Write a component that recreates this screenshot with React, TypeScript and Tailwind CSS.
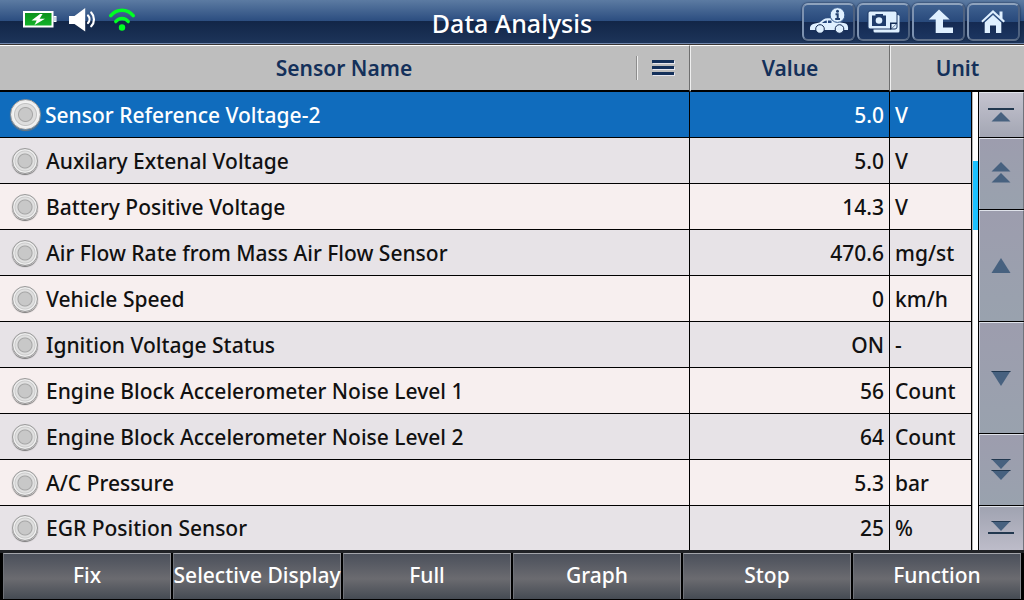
import type React from "react";
import { useState } from "react";
import { clsx } from "clsx";

interface Sensor {
  name: string;
  value: string;
  unit: string;
}

const SENSORS: Sensor[] = [
  { name: "Sensor Reference Voltage-2", value: "5.0", unit: "V" },
  { name: "Auxilary Extenal Voltage", value: "5.0", unit: "V" },
  { name: "Battery Positive Voltage", value: "14.3", unit: "V" },
  { name: "Air Flow Rate from Mass Air Flow Sensor", value: "470.6", unit: "mg/st" },
  { name: "Vehicle Speed", value: "0", unit: "km/h" },
  { name: "Ignition Voltage Status", value: "ON", unit: "-" },
  { name: "Engine Block Accelerometer Noise Level 1", value: "56", unit: "Count" },
  { name: "Engine Block Accelerometer Noise Level 2", value: "64", unit: "Count" },
  { name: "A/C Pressure", value: "5.3", unit: "bar" },
  { name: "EGR Position Sensor", value: "25", unit: "%" },
];

const ACTIONS = ["Fix", "Selective Display", "Full", "Graph", "Stop", "Function"];

const BatteryIcon = () => (
  <svg width="34" height="18" viewBox="0 0 34 18" aria-hidden="true">
    <defs>
      <linearGradient id="charge" x1="0" y1="0" x2="0" y2="1">
        <stop offset="0" stopColor="#0b8f1c" />
        <stop offset="1" stopColor="#12b52a" />
      </linearGradient>
    </defs>
    <rect x="1" y="1" width="28.500" height="14.500" fill="url(#charge)" stroke="#fff" strokeWidth="2" />
    <rect x="31" y="5.500" width="2" height="5" fill="#9fb4cf" stroke="#fff" strokeWidth="1" />
    <path d="M17 3 8.500 9.500h5.200l-2.200 4.500L22 7.700h-5.400l3-4.700z" fill="#fff" />
  </svg>
);

const SpeakerIcon = () => (
  <svg width="28" height="24" viewBox="0 0 28 24" aria-hidden="true">
    <path d="M0 8h5.500L16.200 0v23.500L5.500 16H0z" fill="#fff" />
    <path
      d="M19 7.500a5.500 5.500 0 0 1 0 7.500M22.200 4.500a10 10 0 0 1 0 13.800"
      fill="none"
      stroke="#fff"
      strokeWidth="2.200"
      strokeLinecap="round"
    />
  </svg>
);

const WifiIcon = () => (
  <svg width="26" height="24" viewBox="0 0 26 24" fill="none" stroke="#00ff22" strokeWidth="3.400" strokeLinecap="round" aria-hidden="true">
    <path d="M1.800 7.600C7.500 .4 18.500 .4 24.200 7.600" />
    <path d="M6.800 13.600c3-4.200 9.400-4.200 12.400 0" />
    <circle cx="13" cy="19.500" r="3.200" fill="#00ff22" stroke="none" />
  </svg>
);

const CarInfoIcon = () => (
  <svg className="h-full w-full" viewBox="2 2 49 34" aria-hidden="true">
    <path
      d="M8 27c-.4-3.500 1-5.500 4-6.200l5.500-1.300c2.500-2.300 5-4.300 8-4.300H31c3 0 5.500 2 7.500 4.300l4.500.8c2.600.6 3.500 3.300 3 6.700z"
      fill="#dff0ff"
    />
    <path d="M20 20c1.500-1.500 3-2.500 4.800-2.600V20zM26 17.400h3.500V20H26z" fill="#24457a" />
    <g fill="#dff0ff" stroke="#142a52" strokeWidth="1">
      <circle cx="18" cy="26" r="4.300" />
      <circle cx="37.500" cy="26" r="4.300" />
      <circle cx="35.500" cy="12" r="7.400" stroke="#31568a" />
    </g>
    <circle cx="35.500" cy="8.200" r="1.500" fill="#22406f" />
    <path d="M33.500 11.200h2.200v4.600M33.200 16H38" fill="none" stroke="#22406f" strokeWidth="2" />
  </svg>
);

const SnapshotIcon = () => (
  <svg className="h-full w-full" viewBox="2 2 49 34" aria-hidden="true">
    <rect x="16.500" y="12" width="26" height="17.500" rx="1.500" fill="#dff0ff" />
    <rect x="11" y="8" width="29" height="18" rx="2" fill="#dff0ff" stroke="#1b3765" strokeWidth="1" />
    <path d="M15 12.500h3.500V11H26v1.500h3V23H15z" fill="#1f3c6b" />
    <circle cx="22" cy="17.500" r="3.300" fill="#dff0ff" />
    <path d="M33 26.500v-7h7v1l-6 6z" fill="#122b55" />
    <path d="M34.500 25.500v-4.500H39z" fill="#dff0ff" />
  </svg>
);

const BackIcon = () => (
  <svg className="h-full w-full" viewBox="2 2 49 34" aria-hidden="true">
    <path d="M27 6.500 37.700 16.500H31v8h10v5.500H23.700V16.500h-7z" fill="#dff0ff" />
  </svg>
);

const HomeIcon = () => (
  <svg className="h-full w-full" viewBox="2 2 49 34" aria-hidden="true">
    <path d="M26 7 14.300 18l1.200 1.500L26 10l10.500 9.500 1.500-1.500-2.500-2.500V8.500h-3V13z" fill="#dff0ff" />
    <path d="M26 12 17.700 19.500V30H23v-7.500h6V30h5.300V19.500z" fill="#dff0ff" />
  </svg>
);

const ToolButton: React.FC<{ label: string; children: React.ReactNode }> = ({ label, children }) => (
  <button
    aria-label={label}
    className="h-[38px] w-[53px] rounded-md border-2 border-t-[#8fa3bd] border-r-[#4f6280] border-b-[#5d6e88] border-l-[#7d92b0] bg-[linear-gradient(#3f6190,#28497b_50%,#142a52_50%,#1c3560)] shadow-[0_0_2px_#0a1a38]"
  >
    {children}
  </button>
);

// Arrow glyphs of the scroll column, one drawing per button
const SCROLL_BUTTONS: { label: string; height: string; path: string; bar?: number }[] = [
  { label: "Go to top", height: "h-[46px]", path: "M14 9 4.500 18.500h19z", bar: 6 },
  { label: "Page up", height: "h-[72px]", path: "M14 0 4.500 9.500h19zM14 11 4.500 20.500h19z" },
  { label: "Line up", height: "h-[112px]", path: "M14 4 4.500 19h19z" },
  { label: "Line down", height: "h-[112px]", path: "M14 20 4.500 5h19z" },
  { label: "Page down", height: "h-[72px]", path: "M14 11 4.500 1h19zM14 22 4.500 12h19z" },
  { label: "Go to bottom", height: "h-11", path: "M14 14 4.500 4h19z", bar: 16 },
];

const ScrollColumn = () => (
  <div className="flex">
    <div className="w-[6px] border-l border-[#b5b5b5] bg-white pt-[69px]">
      <div className="h-[69px] bg-[#1cc1ff]" />
    </div>
    <div className="flex flex-1 flex-col border-l border-black">
      {SCROLL_BUTTONS.map(({ label, height, path, bar }, i) => (
        <button
          key={label}
          aria-label={label}
          className={clsx("flex flex-col border-black", height, i < SCROLL_BUTTONS.length - 1 && "border-b")}
        >
          <span
            className={clsx(
              "flex w-full flex-1 items-center justify-center border-t border-r border-l border-t-[#dfe2ea] border-r-[#70737c] border-l-[#c8cad6]",
              i === 0 && "bg-[linear-gradient(#c4c3cf,#a3a6b3)]",
              i === 5 && "bg-[linear-gradient(#a0a3b1,#bdbcc9)]",
              i > 0 && i < 5 && "bg-[linear-gradient(#9d9dae,#99a2ae)]"
            )}
          >
            <svg width="30" height="24" viewBox="0 0 30 24" aria-hidden="true">
              <path d={path} fill="#47617f" />
              {bar && <path d={`M1 ${bar}h26`} stroke="#22384f" strokeWidth="2" />}
              {i > 2 && (
                <path
                  d={i === 3 ? "M4.500 5.500h19" : i === 4 ? "M4.500 1.500h19M4.500 12.500h19" : "M4.500 4.500h19"}
                  stroke="#22384f"
                />
              )}
            </svg>
          </span>
        </button>
      ))}
    </div>
  </div>
);

export default function App() {
  const [selected, setSelected] = useState(0);
  const [pinned, setPinned] = useState<number[]>([]);

  const togglePinned = (i: number) =>
    setPinned((prev) => (prev.includes(i) ? prev.filter((p) => p !== i) : [...prev, i]));

  const headCell =
    "h-[47px] border-t border-b-2 border-t-white border-b-black bg-[#bebebe] p-0 font-semibold text-[#14305a]";

  return (
    <div className="flex min-h-screen flex-col bg-black font-['Noto_Sans','DejaVu_Sans',sans-serif] text-[21px] leading-7 font-medium">
      <header className="grid h-11 grid-cols-[1fr_auto_1fr] items-center border-b border-[#7389ad] bg-[linear-gradient(#5c7ba2,#2a4c7f_50%,#122648_50%,#1d3459)]">
        <div className="flex items-center gap-3 pb-1 pl-[23px]">
          <BatteryIcon />
          <SpeakerIcon />
          <WifiIcon />
        </div>
        <h1 className="pt-[2px] text-[25px] font-medium text-white">Data Analysis</h1>
        <div className="flex items-center justify-end gap-[2px] pr-1">
          <ToolButton label="Vehicle information">
            <CarInfoIcon />
          </ToolButton>
          <ToolButton label="Snapshot">
            <SnapshotIcon />
          </ToolButton>
          <ToolButton label="Back">
            <BackIcon />
          </ToolButton>
          <ToolButton label="Home">
            <HomeIcon />
          </ToolButton>
        </div>
      </header>

      <table className="w-full table-fixed border-separate border-spacing-0 border-t border-[#3a3533]">
        <colgroup>
          <col />
          <col className="w-[200px]" />
          <col className="w-[82px]" />
          <col className="w-[52px]" />
        </colgroup>
        <thead>
          <tr>
            <th className={clsx(headCell, "border-r border-r-[#6f6f6f]")}>
              <div className="flex items-center">
                <span className="flex-1 pl-[52px]">Sensor Name</span>
                <button
                  aria-label="Column menu"
                  className="flex h-6 w-[53px] flex-col items-center justify-center gap-[3px] border-l border-[#8d8d8d] pb-[2px] shadow-[inset_1px_0_0_#eeeeee]"
                >
                  <span className="h-[3px] w-[22px] bg-[#14305a] shadow-[1px_1px_0_#e6e6ee]" />
                  <span className="h-[3px] w-[22px] bg-[#14305a] shadow-[1px_1px_0_#e6e6ee]" />
                  <span className="h-[3px] w-[22px] bg-[#14305a] shadow-[1px_1px_0_#e6e6ee]" />
                </button>
              </div>
            </th>
            <th className={clsx(headCell, "border-r border-l border-r-[#6f6f6f] border-l-[#efefef]")}>Value</th>
            <th colSpan={2} className={clsx(headCell, "border-l border-l-[#efefef]")}>
              Unit
            </th>
          </tr>
        </thead>
        <tbody>
          {SENSORS.map((sensor, i) => {
            const active = i === selected;
            const last = i === SENSORS.length - 1;
            const cell = clsx("border-r border-black p-0", last ? "h-11" : "h-[46px] border-b");

            return (
              <tr
                key={sensor.name}
                onClick={() => setSelected(i)}
                className={clsx(
                  active ? "bg-[#106cbd] text-white" : "text-[#111111]",
                  !active && (i % 2 ? "bg-[#e7e3e7]" : "bg-[#f7efef]")
                )}
              >
                <td className={cell}>
                  <label className={clsx("flex items-center", active ? "gap-1 pl-[10px]" : "gap-2 pl-3")}>
                    <input
                      type="checkbox"
                      checked={pinned.includes(i)}
                      onChange={() => togglePinned(i)}
                      className={clsx(
                        "shrink-0 appearance-none rounded-full border border-[#9a9a9a] shadow-[0_1px_1px_#777777]",
                        active
                          ? "size-[31px] bg-[radial-gradient(circle,#c8c8c8_0_6px,#a6a6a6_7px,#dcdcdc_8px,#dedede_10px,#c2c2c2_11px,#f4f4f4_12px,#e6e6e6_15px)]"
                          : "size-[26px] bg-[radial-gradient(circle,#c8c8c8_0_6px,#a6a6a6_7px,#dddddd_8px,#e2e2e2_9px,#cacaca_10px,#f2f2f2_11px,#e0e0e0_12px)]"
                      )}
                    />
                    <span className="whitespace-nowrap">{sensor.name}</span>
                  </label>
                </td>
                <td className={clsx(cell, "pr-[5px] text-right")}>{sensor.value}</td>
                <td className={clsx(cell, "pl-[5px]")}>{sensor.unit}</td>
                {i === 0 && (
                  <td rowSpan={SENSORS.length} className="p-0 align-top">
                    <ScrollColumn />
                  </td>
                )}
              </tr>
            );
          })}
        </tbody>
      </table>

      <footer className="grid min-h-[50px] flex-1 grid-cols-6 gap-[2px] border-t-[3px] border-b border-t-[#202226] border-b-black bg-black px-[3px]">
        {ACTIONS.map((action) => (
          <button
            key={action}
            className="flex min-w-0 items-center justify-center border-t border-r border-l border-t-[#a3a5ab] border-r-[#85878d] border-l-[#6f7278] bg-[linear-gradient(#4b505b,#6b6b70_55%,#454b53)] pb-1 whitespace-nowrap text-white"
          >
            {action}
          </button>
        ))}
      </footer>
    </div>
  );
}
